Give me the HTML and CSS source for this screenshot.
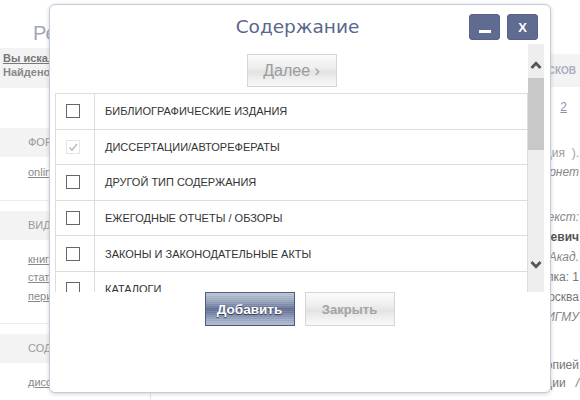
FILE: index.html
```html
<!DOCTYPE html>
<html lang="ru">
<head>
<meta charset="utf-8">
<title>Содержание</title>
<link rel="stylesheet" href="styles.css">
</head>
<body>
<div class="page">
  <div class="top">
    <div class="top-left">
      <h1 class="page-title">Результаты поиска</h1>
      <div class="query">
        <a class="q-link" href="#">Вы искали: диссертации</a>
        <div class="q-found">Найдено документов: 2</div>
      </div>
    </div>
    <div class="top-right">
      <div class="saved-head">Сохранённых поисков</div>
      <div class="saved-cell"><a href="#">2</a></div>
    </div>
  </div>
  <div class="body">
    <aside class="sidebar">
      <section class="side-sec">
        <div class="side-head">Формат</div>
        <div class="side-links first"><a href="#">online</a></div>
      </section>
      <section class="side-sec">
        <div class="side-head">Вид издания</div>
        <div class="side-links"><a href="#">книги</a><a href="#">статьи</a><a href="#">периодика</a></div>
      </section>
      <section class="side-sec">
        <div class="side-head">Содержание</div>
        <div class="side-links"><a href="#">диссертации</a></div>
      </section>
    </aside>
    <main class="results">
      <div class="rec rec1">
        <p class="muted">Автореферат диссертация&nbsp; ).</p>
        <p class="it">Интернет</p>
      </div>
      <div class="rec rec2">
        <p class="it">Полный текст:</p>
        <p class="bold">Алексеевич</p>
        <p class="it">Акад.</p>
        <p>Ссылка: 1</p>
        <p>Москва</p>
        <p class="it">МИГМУ</p>
      </div>
      <div class="rec rec3">
        <p>с копией</p>
        <p>Диссертации&nbsp;&nbsp; <i>/</i></p>
        <p class="left">Научный Лицей Объединённый Лабораторный Н</p>
      </div>
    </main>
  </div>
</div>

<div class="dialog" role="dialog" aria-label="Содержание">
  <div class="dlg-head">
    <h2 class="dlg-title">Содержание</h2>
    <div class="win-btns">
      <button class="win-btn min" aria-label="Свернуть"><span class="min-bar"></span></button>
      <button class="win-btn">X</button>
    </div>
  </div>
  <div class="dlg-scroll">
    <div class="dlg-content">
      <div class="next-wrap"><button class="btn-light next">Далее ›</button></div>
      <ul class="opt-list">
        <li class="opt"><span class="cb-cell"><span class="cb"></span></span><span class="opt-label">БИБЛИОГРАФИЧЕСКИЕ ИЗДАНИЯ</span></li>
        <li class="opt"><span class="cb-cell"><span class="cb checked"><svg width="12" height="12" viewBox="0 0 12 12"><polyline points="2.5,6.5 5,9 10,3" fill="none" stroke="#bdbdbd" stroke-width="1.6"/></svg></span></span><span class="opt-label">ДИССЕРТАЦИИ/АВТОРЕФЕРАТЫ</span></li>
        <li class="opt"><span class="cb-cell"><span class="cb"></span></span><span class="opt-label">ДРУГОЙ ТИП СОДЕРЖАНИЯ</span></li>
        <li class="opt"><span class="cb-cell"><span class="cb"></span></span><span class="opt-label">ЕЖЕГОДНЫЕ ОТЧЕТЫ / ОБЗОРЫ</span></li>
        <li class="opt"><span class="cb-cell"><span class="cb"></span></span><span class="opt-label">ЗАКОНЫ И ЗАКОНОДАТЕЛЬНЫЕ АКТЫ</span></li>
        <li class="opt"><span class="cb-cell"><span class="cb"></span></span><span class="opt-label">КАТАЛОГИ</span></li>
        <li class="opt"><span class="cb-cell"><span class="cb"></span></span><span class="opt-label">КНИГИ</span></li>
        <li class="opt"><span class="cb-cell"><span class="cb"></span></span><span class="opt-label">МАТЕРИАЛЫ КОНФЕРЕНЦИЙ</span></li>
      </ul>
    </div>
    <div class="vscroll">
      <div class="vs-btn up"><svg width="12" height="8" viewBox="0 0 12 8"><polyline points="1.5,7 6,2.3 10.5,7" fill="none" stroke="#555" stroke-width="2.8"/></svg></div>
      <div class="vs-track"><div class="vs-thumb"></div></div>
      <div class="vs-btn down"><svg width="12" height="8" viewBox="0 0 12 8"><polyline points="1.5,1 6,5.7 10.5,1" fill="none" stroke="#555" stroke-width="2.8"/></svg></div>
    </div>
  </div>
  <div class="dlg-foot">
    <button class="btn-dark">Добавить</button>
    <button class="btn-light close">Закрыть</button>
  </div>
</div>
</body>
</html>
```

FILE: styles.css
```css
html, body {
  margin: 0;
  padding: 0;
  background: #fff;
}
body {
  font-family: "Liberation Sans", Arial, sans-serif;
  color: #333;
  width: 580px;
  height: 400px;
  overflow: hidden;
  position: relative;
}
.page {
  width: 580px;
  height: 400px;
  overflow: hidden;
  display: flex;
  flex-direction: column;
}

/* ---------- top area ---------- */
.top {
  display: flex;
  height: 118px;
  flex: none;
}
.top-left {
  width: 330px;
  flex: none;
}
.page-title {
  margin: 23px 0 0 33px;
  font-size: 20px;
  line-height: 20px;
  font-weight: normal;
  color: #a0a8ba;
  white-space: nowrap;
}
.query {
  margin-top: 5px;
  background: #f3f3f3;
  padding: 3px 3px 9px;
  font-size: 11px;
  line-height: 14px;
  font-weight: bold;
  color: #888;
  white-space: nowrap;
}
.q-link {
  display: block;
  color: #777;
  text-decoration: underline;
}
.top-right {
  flex: 1;
  margin-top: 54px;
  min-width: 0;
}
.saved-head {
  height: 33px;
  line-height: 33px;
  background: #f3f3f3;
  font-size: 10px;
  font-weight: bold;
  color: #a9afbf;
  text-transform: uppercase;
  text-align: right;
  padding-right: 4px;
  white-space: nowrap;
  overflow: hidden;
}
.saved-cell {
  text-align: right;
  padding-right: 13px;
  line-height: 40px;
  font-size: 12px;
}
.saved-cell a {
  color: #8a93ad;
}

/* ---------- body ---------- */
.body {
  display: flex;
  flex: 1;
  min-height: 0;
}
.sidebar {
  width: 150px;
  flex: none;
  border-right: 1px solid #e6e6e6;
}
.side-sec {
  padding-top: 10px;
  border-bottom: 1px solid #ececec;
}
.side-head {
  height: 29px;
  line-height: 29px;
  background: #f3f3f3;
  padding-left: 28px;
  font-size: 11px;
  color: #999;
  text-transform: uppercase;
  white-space: nowrap;
}
.side-links {
  padding: 10px 0 18px 28px;
  line-height: 18.5px;
  font-size: 11px;
}
.side-links.first {
  padding-top: 6px;
}
.side-links a {
  display: block;
  color: #888;
  text-decoration: underline;
}
.results {
  flex: 1;
  min-width: 0;
  padding-top: 26px;
  text-align: right;
  font-size: 12px;
  color: #777;
  white-space: nowrap;
  overflow: hidden;
}
.results p {
  margin: 0;
  padding-right: 1px;
}
.rec1 { line-height: 19px; }
.rec2 { line-height: 20px; margin-top: 25px; }
.rec3 { line-height: 18px; margin-top: 29px; }
.results .muted { color: #a0a0a0; }
.results .it { font-style: italic; color: #888; }
.results .bold { font-weight: bold; color: #555; }
.results .left { text-align: left; padding-left: 111px; margin-top: 5px; }

/* ---------- dialog ---------- */
.dialog {
  position: absolute;
  left: 49px;
  top: 4px;
  width: 502px;
  height: 389px;
  box-sizing: border-box;
  background: #fff;
  border: 1px solid #c4cbd7;
  border-radius: 6px;
  box-shadow: 0 1px 4px rgba(70, 80, 100, 0.25);
  padding: 0 6px 0 5px;
  display: flex;
  flex-direction: column;
}
.dlg-head {
  height: 39px;
  flex: none;
  display: grid;
  grid-template-columns: 1fr auto 1fr;
  align-items: start;
}
.dlg-title {
  grid-column: 2;
  margin: 0 4px 0 0;
  padding-top: 10px;
  font-family: "DejaVu Sans", Verdana, sans-serif;
  font-weight: normal;
  font-size: 18.5px;
  line-height: 24px;
  color: #58678c;
  white-space: nowrap;
}
.win-btns {
  grid-column: 3;
  justify-self: end;
  display: flex;
  gap: 7px;
  margin: 9px 6px 0 0;
}
.win-btn {
  box-sizing: border-box;
  width: 31px;
  height: 26px;
  padding: 0;
  border: 1px solid #56628a;
  border-radius: 3px;
  background: #5f6b91;
  color: #fff;
  font-family: "Liberation Sans", Arial, sans-serif;
  font-weight: bold;
  font-size: 13px;
  line-height: 1;
  display: flex;
  align-items: center;
  justify-content: center;
}
.win-btn.min {
  align-items: flex-end;
  padding-bottom: 6px;
}
.min-bar {
  display: block;
  width: 12px;
  height: 3px;
  background: #fff;
}

.dlg-scroll {
  height: 248px;
  flex: none;
  display: flex;
}
.dlg-content {
  flex: 1;
  min-width: 0;
  overflow: hidden;
}
.next-wrap {
  display: flex;
  justify-content: center;
  padding-top: 10px;
}
.btn-light,
.btn-dark {
  box-sizing: border-box;
  width: 90px;
  height: 34px;
  padding: 0;
  font-family: "Liberation Sans", Arial, sans-serif;
  font-size: 13px;
  font-weight: bold;
  cursor: pointer;
}
.btn-light {
  border: 1px solid #d6d6d6;
  background: linear-gradient(to bottom, #fbfbfb 0%, #eeeeee 40%, #e3e3e3 55%, #f1f1f1 80%, #f8f8f8 100%);
  color: #a3a3a3;
}
.btn-light.next {
  height: 33px;
  font-size: 16px;
  font-weight: normal;
  color: #9b9b9b;
}
.btn-dark {
  border: 1px solid #4d5b80;
  background:
    repeating-linear-gradient(to bottom, rgba(255, 255, 255, 0.13) 0 1px, rgba(255, 255, 255, 0) 1px 2px),
    linear-gradient(to bottom, #bac2d3 0%, #9ba6bf 22%, #7784a4 40%, #5c698e 50%, #6e7b9d 62%, #93a0ba 80%, #b0b9cc 100%);
  color: #fff;
  font-size: 13.5px;
  text-shadow: 0 1px 1px #2c3550;
}

.opt-list {
  list-style: none;
  margin: 6px 0 0;
  padding: 0;
  border: 1px solid #ddd;
  border-bottom: none;
}
.opt {
  display: grid;
  grid-template-columns: 39px 1fr;
  height: 35.6px;
  box-sizing: border-box;
  border-bottom: 1px solid #ddd;
}
.cb-cell {
  border-right: 1px solid #ddd;
  display: flex;
  align-items: center;
  padding-left: 10px;
}
.cb {
  box-sizing: border-box;
  width: 14px;
  height: 14px;
  border: 1px solid #666;
  background: #fff;
  display: flex;
  align-items: center;
  justify-content: center;
}
.cb.checked {
  border-color: #e4e4e4;
}
.opt-label {
  display: flex;
  align-items: center;
  padding-left: 10px;
  font-size: 11px;
  color: #333;
  white-space: nowrap;
}

.vscroll {
  width: 16px;
  flex: none;
  background: #eeeeee;
  display: flex;
  flex-direction: column;
}
.vs-btn {
  box-sizing: border-box;
  height: 34px;
  flex: none;
  display: flex;
  justify-content: center;
  align-items: flex-start;
}
.vs-btn.up { padding-top: 17px; }
.vs-btn.down { padding-top: 3px; }
.vs-track { flex: 1; }
.vs-thumb {
  height: 72px;
  background: #c8c8c8;
}

.dlg-foot {
  display: flex;
  justify-content: center;
  gap: 10px;
}
```
